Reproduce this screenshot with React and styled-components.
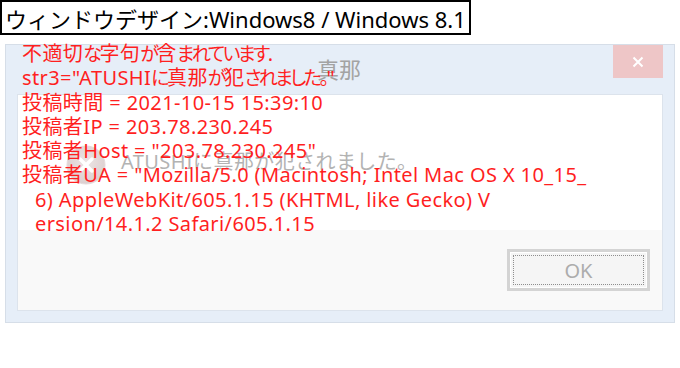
import React from "react";
import styled, { createGlobalStyle } from "styled-components";

const Global = createGlobalStyle`
  html, body { margin: 0; padding: 0; background: #fff; }
  body { font-family: "Noto Sans", "Noto Sans CJK JP", sans-serif; }
`;

const Page = styled.div`
  position: relative;
  width: 680px;
  height: 368px;
  overflow: hidden;
`;

const Heading = styled.div`
  display: inline-flex;
  align-items: center;
  box-sizing: border-box;
  height: 35px;
  border: 2px solid #000;
  padding: 0 3px 0 3px;
  font-family: "Noto Sans", "Noto Sans CJK JP", sans-serif;
  font-size: 22px;
  color: #000;
  white-space: nowrap;
`;

const Dialog = styled.div`
  box-sizing: border-box;
  margin: 9px 0 0 5px;
  width: 670px;
  height: 279px;
  background: #e6eef8;
  border: 1px solid #d6dee8;
  padding: 0 11px 11px 11px;
  display: flex;
  flex-direction: column;
`;

const TitleBar = styled.div`
  height: 49px;
  display: grid;
  grid-template-columns: 1fr auto 1fr;
  align-items: center;
`;

const Title = styled.div`
  grid-column: 2;
  font-family: "Noto Sans CJK JP", sans-serif;
  font-size: 22px;
  color: #a3a3a3;
  margin-top: -4px;
  margin-right: 2px;
`;

const CloseButton = styled.div`
  grid-column: 3;
  justify-self: end;
  align-self: start;
  width: 50px;
  height: 33px;
  background: #eec6c7;
  display: flex;
  align-items: center;
  justify-content: center;
`;

const Panel = styled.div`
  flex: 1;
  border: 1px solid #dce3ec;
  display: flex;
  flex-direction: column;
`;

const Body = styled.div`
  flex: 1;
  background: #fff;
  display: flex;
  align-items: center;
  gap: 15px;
  padding: 4px 0 0 48px;
`;

const GhostText = styled.div`
  font-family: "Noto Sans", "Noto Sans CJK JP", sans-serif;
  font-size: 20px;
  letter-spacing: 0.4px;
  color: #b3b3b3;
  white-space: nowrap;
  margin-top: -8px;
`;

const Footer = styled.div`
  height: 80px;
  background: #f9f9f9;
  display: flex;
  justify-content: flex-end;
  align-items: flex-start;
  padding: 19px 12px 0 0;
  box-sizing: border-box;
`;

const OkButton = styled.div`
  box-sizing: border-box;
  width: 143px;
  height: 42px;
  border: 3px solid #d4d4d4;
  box-shadow: inset 0 0 0 1px #fff;
  background: #f5f5f5;
  outline: 1px dotted #8e8e8e;
  outline-offset: -7px;
  display: flex;
  align-items: center;
  justify-content: center;
  font-family: "Noto Sans", sans-serif;
  font-size: 20px;
  color: #acacac;
`;

const Overlay = styled.div`
  position: absolute;
  left: 22px;
  top: 42px;
  font-family: "Noto Sans", "Noto Sans CJK JP", sans-serif;
  font-size: 20px;
  letter-spacing: 0.4px;
  line-height: 24.3px;
  color: #ff1f1f;
`;

const Line = styled.div`
  white-space: pre;
  padding-left: ${(p) => (p.$indent ? "13px" : "0")};
`;

/* proportional (narrow) kana, as in Meiryo UI */
const Kana = styled.span`
  font-feature-settings: "palt" 1;
  font-size: 19px;
  letter-spacing: -2.5px;
`;

const ErrorIcon = () => (
  <svg width="40" height="40" viewBox="0 0 40 40">
    <defs>
      <radialGradient id="eg" cx="50%" cy="40%" r="60%">
        <stop offset="0%" stopColor="#ece4e4" />
        <stop offset="100%" stopColor="#dccfcf" />
      </radialGradient>
    </defs>
    <circle cx="20" cy="20" r="19" fill="url(#eg)" stroke="#e4dada" />
    <path d="M14 14 L26 26 M26 14 L14 26" stroke="#fff" strokeWidth="3.5" strokeLinecap="round" />
  </svg>
);

const CloseIcon = () => (
  <svg width="12" height="12" viewBox="0 0 12 12">
    <path d="M1.5 1.5 L10.5 10.5 M10.5 1.5 L1.5 10.5" stroke="#fff" strokeWidth="2" />
  </svg>
);

export default function App() {
  return (
    <Page>
      <Global />
      <Heading>ウィンドウデザイン:Windows8 / Windows 8.1</Heading>
      <Dialog>
        <TitleBar>
          <Title>真那</Title>
          <CloseButton>
            <CloseIcon />
          </CloseButton>
        </TitleBar>
        <Panel>
          <Body>
            <ErrorIcon />
            <GhostText>ATUSHIに真那が犯されました。</GhostText>
          </Body>
          <Footer>
            <OkButton>OK</OkButton>
          </Footer>
        </Panel>
      </Dialog>
      <Overlay>
        <Line>
          不適切<Kana>な</Kana>字句<Kana>が</Kana>含<Kana>まれています</Kana>.
        </Line>
        <Line>
          str3="ATUSHI<Kana>に</Kana>真那<Kana>が</Kana>犯<Kana>されました。</Kana>"
        </Line>
        <Line>投稿時間 = 2021-10-15 15:39:10</Line>
        <Line>投稿者IP = 203.78.230.245</Line>
        <Line>投稿者Host = "203.78.230.245"</Line>
        <Line>投稿者UA = "Mozilla/5.0 (Macintosh; Intel Mac OS X 10_15_</Line>
        <Line $indent>6) AppleWebKit/605.1.15 (KHTML, like Gecko) V</Line>
        <Line $indent>ersion/14.1.2 Safari/605.1.15</Line>
      </Overlay>
    </Page>
  );
}
